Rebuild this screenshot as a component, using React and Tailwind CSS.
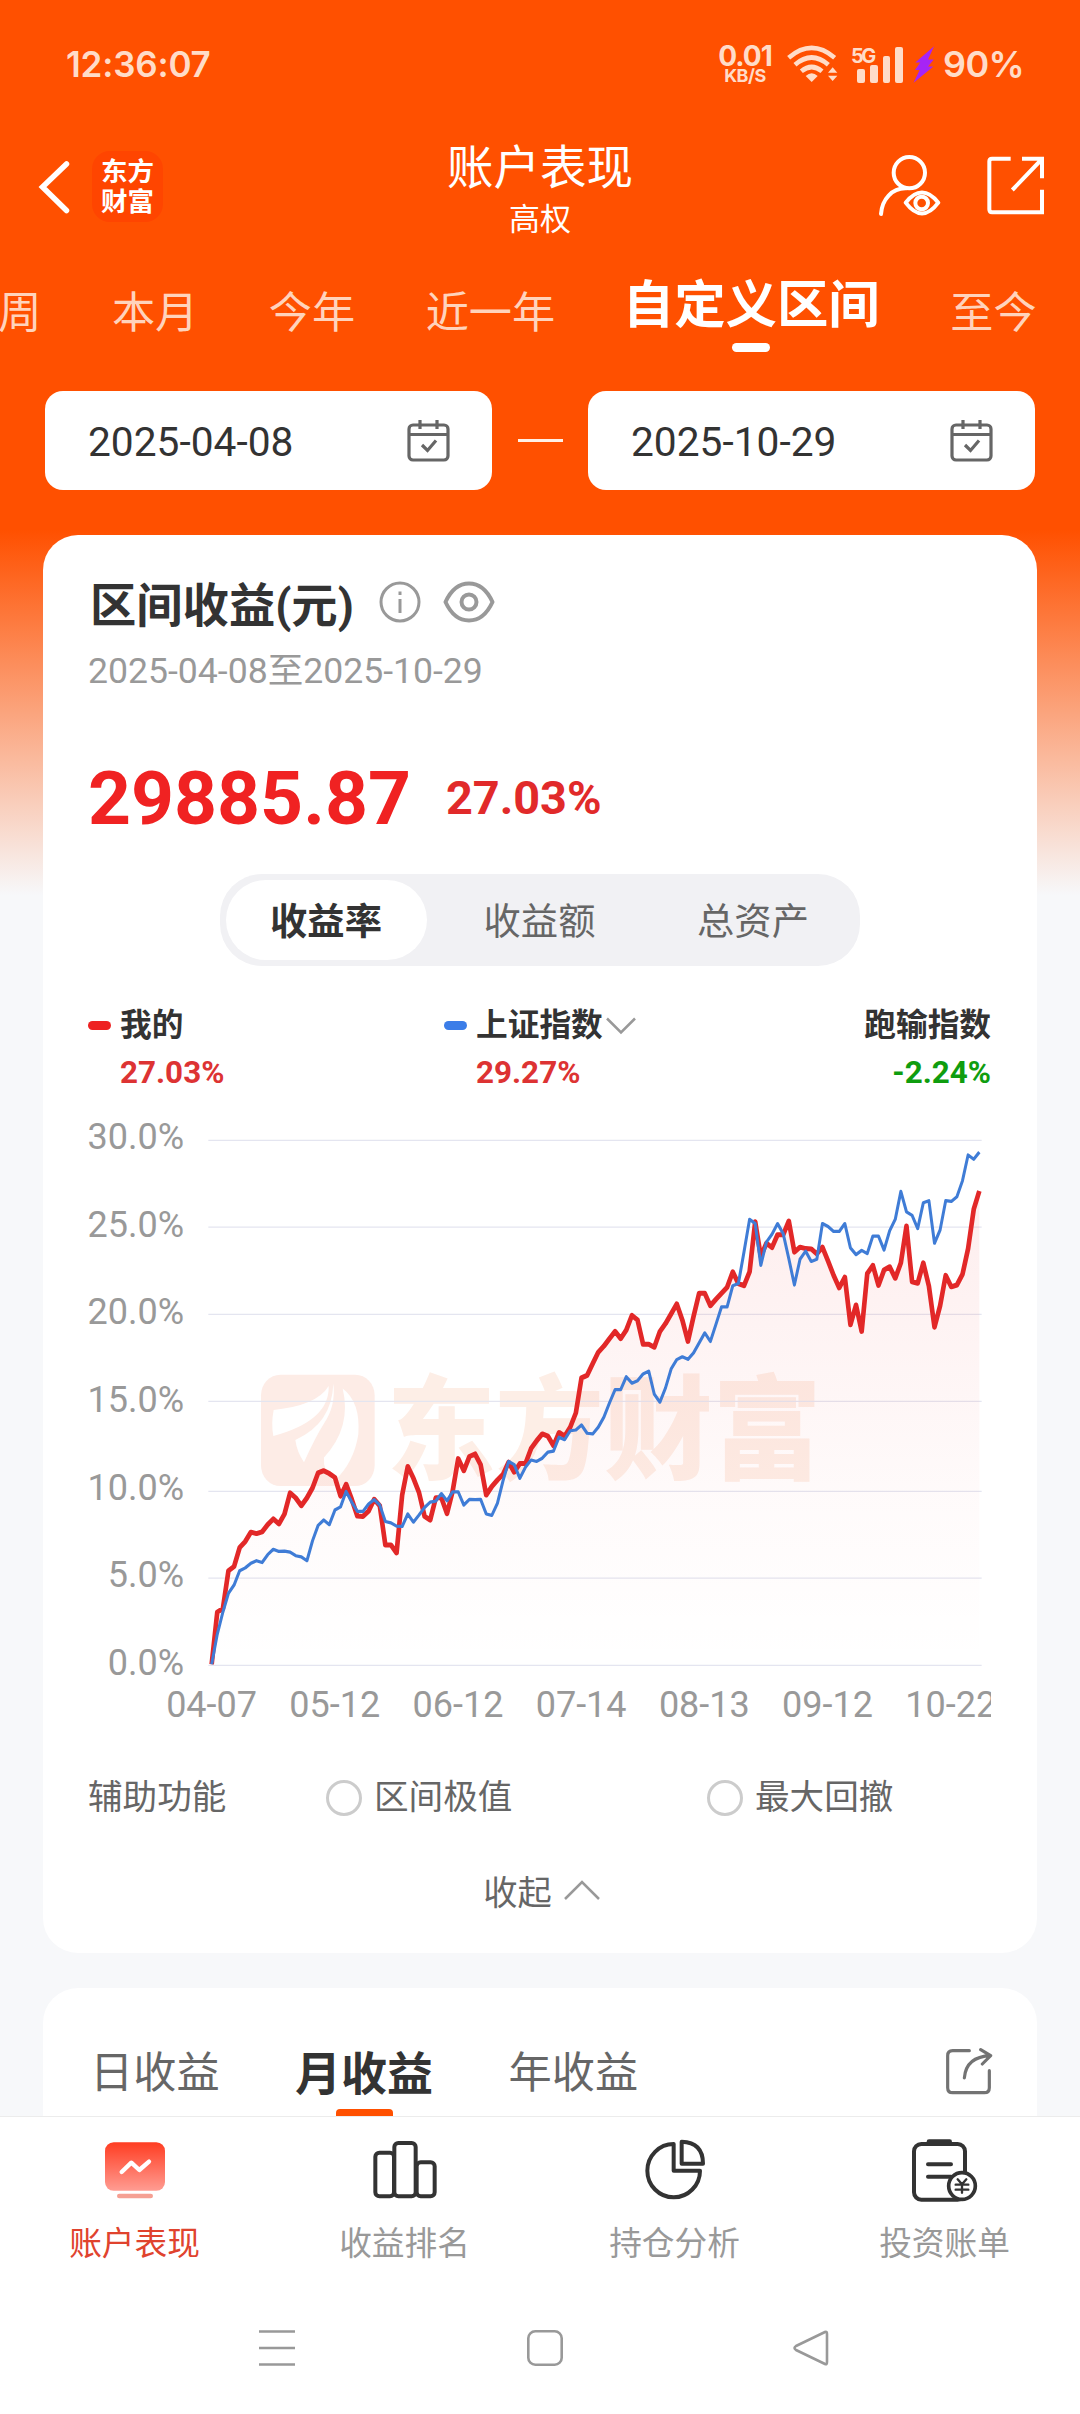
import React, { useState } from "react";

const periods = ["本周", "本月", "今年", "近一年", "自定义区间", "至今"];
const yLabels = ["30.0%", "25.0%", "20.0%", "15.0%", "10.0%", "5.0%", "0.0%"];
const xLabels = ["04-07", "05-12", "06-12", "07-14", "08-13", "09-12", "10-22"];
const gridLines = [57, 300, 544, 788, 1040, 1283, 1527];

const mine = [
  1524, 1378, 1368, 1262, 1250, 1197, 1180, 1154, 1158, 1153, 1133, 1117, 1131, 1103, 1044, 1058, 1080, 1058, 1030, 988,
  982, 990, 1001, 1053, 1020, 1062, 1109, 1110, 1095, 1062, 1080, 1190, 1190, 1212, 1050, 970, 1003, 1043, 1110, 1120,
  1058, 1058, 1102, 1040, 948, 982, 942, 935, 965, 1050, 1026, 1008, 992, 958, 986, 962, 962, 920, 898, 879,
  885, 912, 875, 885, 860, 820, 722, 715, 682, 650, 633, 612, 592, 612, 588, 547, 560, 628, 628, 636,
  592, 570, 543, 515, 560, 620, 550, 485, 485, 520, 502, 485, 468, 425, 458, 464, 425, 285, 382, 345,
  357, 321, 321, 283, 370, 356, 360, 361, 375, 356, 395, 435, 470, 440, 573, 518, 592, 430, 407, 463,
  420, 411, 443, 400, 297, 453, 457, 400, 465, 580, 520, 435, 467, 462, 432, 360, 250, 199,
];

const market = [
  1524, 1440, 1378, 1325, 1302, 1262, 1254, 1241, 1234, 1239, 1217, 1202, 1208, 1207, 1210, 1220, 1223, 1234, 1178, 1135,
  1120, 1133, 1092, 1083, 1040, 1070, 1096, 1096, 1075, 1063, 1078, 1124, 1128, 1137, 1138, 1103, 1126, 1106, 1085, 1070,
  1067, 1046, 1066, 1041, 1041, 1078, 1062, 1063, 1062, 1103, 1107, 1073, 1010, 956, 965, 1003, 972, 952, 956, 947,
  930, 927, 888, 895, 870, 868, 854, 877, 879, 860, 832, 792, 755, 755, 719, 737, 730, 711, 703, 768,
  790, 750, 697, 671, 663, 670, 652, 624, 596, 620, 572, 523, 523, 464, 458, 370, 278, 290, 407, 342,
  320, 290, 318, 388, 462, 390, 367, 396, 390, 290, 298, 312, 312, 290, 358, 377, 365, 374, 325, 325,
  364, 310, 278, 200, 257, 267, 304, 232, 226, 345, 308, 226, 228, 215, 170, 98, 110, 90,
];

const toPoints = (values) => values.map((y, i) => `${(65 + i * 16.81).toFixed(1)},${y}`).join(" ");

const StatusBar = () => (
  <div className="flex h-[128px] items-center justify-between pl-[66px] pr-[57px] font-['Inter',sans-serif] text-[#ffdcc8]">
    <span className="text-[35px] font-semibold tracking-[-0.2px]">12:36:07</span>
    <div className="flex items-center">
      <div className="flex w-[54px] flex-col items-center">
        <span className="text-[28px] font-bold leading-[22px] tracking-[-1px]">0.01</span>
        <span className="mt-px text-[18px] font-bold leading-[16px] tracking-[-0.5px]">KB/S</span>
      </div>
      <svg className="ml-[14px] h-[38px] w-[52px]" viewBox="256 44 156 114" fill="none" stroke="currentColor">
        <path d="M264 82Q333 23 402 82M283 103Q333 60 383 103M302 123Q333 97 364 123" strokeWidth="14" />
        <path d="M315 137Q333 121 351 137L333 155Z" fill="currentColor" stroke="none" />
        <path d="M382 127L396 111L410 127ZM382 136L396 152L410 136Z" fill="currentColor" stroke="none" />
      </svg>
      <div className="ml-[13px] flex h-[37px] w-[52px] items-end gap-[5px] pl-[6px]">
        <div className="relative h-[14px] w-[8px] rounded-[2px] bg-[#ffdcc8]">
          <span className="absolute -left-[6px] bottom-[17px] text-[20px] font-bold leading-[20px] tracking-[-2.500px]">5G</span>
        </div>
        <div className="h-[18px] w-[8px] rounded-[2px] bg-[#ffdcc8]" />
        <div className="h-[27px] w-[8px] rounded-[2px] bg-[#ffdcc8]" />
        <div className="h-[36px] w-[8px] rounded-[2px] bg-[#ffdcc8]" />
      </div>
      <svg className="ml-[10px] h-[37px] w-[22px]" viewBox="644 50 64 110">
        <path d="M706 51L650 99H665L649 121H663L645 159L704 111H688L705 90H688Z" fill="#a624f5" />
      </svg>
      <span className="ml-[8px] w-[80px] text-[36px] font-semibold tracking-[-0.6px]">90%</span>
    </div>
  </div>
);

const Header = () => (
  <header className="grid h-[120px] grid-cols-[1fr_auto_1fr] text-white">
    <div className="flex pl-[38px] pt-[23px]">
      <svg className="mt-[9px] h-[54px] w-[32px]" viewBox="0 0 32 54" fill="none" stroke="currentColor" strokeWidth="5.5" strokeLinecap="round">
        <path d="M28.5 4L4.500 27L28.500 50.500" />
      </svg>
      <div className="ml-[22px] flex h-[71px] w-[71px] flex-col items-center justify-center rounded-[18px] bg-[#ff4500] pt-px text-[26.500px] font-bold leading-[30px]">
        <span>东方</span>
        <span>财富</span>
      </div>
    </div>
    <div className="flex flex-col items-center pt-[12px]">
      <h1 className="text-[46.500px] leading-[56px]">账户表现</h1>
      <span className="mt-[4px] text-[31px] leading-[40px]">高权</span>
    </div>
    <div className="flex justify-end pr-[34px] pt-[26px]">
      <svg className="h-[64px] w-[64px]" viewBox="534 374 192 192" fill="none" stroke="currentColor" strokeWidth="12" strokeLinecap="round">
        <circle cx="628" cy="430" r="47" />
        <path d="M543 554C546 510 576 476 618 477" />
        <path d="M617 520Q666 459 715 520Q666 585 617 520Z" strokeLinejoin="round" />
        <circle cx="665" cy="521" r="19" />
      </svg>
      <svg className="ml-[44px] mt-px h-[60px] w-[60px]" viewBox="858 376 180 180" fill="none" stroke="currentColor" strokeWidth="12">
        <path d="M932 387H876Q868 387 868 395V539Q868 548 876 548H1026V480" />
        <path d="M966 387H1026V446M1026 388L937 481" />
      </svg>
    </div>
  </header>
);

const PeriodTabs = () => {
  const [active, setActive] = useState("自定义区间");
  return (
    <div className="overflow-hidden">
      <nav className="-ml-[45px] flex h-[143px] gap-[70.500px] whitespace-nowrap pt-[26px]">
        {periods.map((item) =>
          item === active ? (
            <button key={item} className="-ml-[3px] flex shrink-0 flex-col items-center text-[51.400px] font-bold leading-[64px] text-white">
              {item}
              <span className="mt-[5px] h-[9px] w-[38px] rounded-full bg-white" />
            </button>
          ) : (
            <button key={item} onClick={() => setActive(item)} className="h-[80px] shrink-0 text-[43.200px] text-[#ffd3bc]">
              {item}
            </button>
          )
        )}
      </nav>
    </div>
  );
};

const DateBox = ({ value }) => (
  <button className="flex h-[99px] w-[447px] items-center justify-between rounded-[18px] bg-white pl-[43px] pr-[42px] text-[40.700px] text-[#333]">
    <span className="pt-[4px]">{value}</span>
    <svg className="h-[42px] w-[43px]" viewBox="0 0 43 42" fill="none" stroke="#666" strokeWidth="3.2">
      <rect x="2" y="5" width="39" height="35" rx="4" />
      <path d="M2 14.500H41M13 0V9M30 0V9M15 25L20.500 30.500L29 20.500" />
    </svg>
  </button>
);

const Watermark = () => (
  <g>
    <rect x="213" y="713" width="341" height="312" rx="58" fill="#fdece6" />
    <path d="M251 812Q380 800 416 745Q420 842 250 885Q243 850 251 812Z" fill="#fff" />
    <path d="M430 738Q438 800 402 850Q378 885 342 958Q321 930 316 896Q426 850 430 738Z" fill="#fff" />
    <path d="M458 752Q512 790 505 880Q492 960 432 1012Q398 985 402 945Q486 860 458 752Z" fill="#fff" />
    <text x="590" y="980" fontSize="316" fontWeight="900" fill="#fdeee6" textLength="1304" lengthAdjust="spacingAndGlyphs">
      东方财富
    </text>
  </g>
);

const ReturnChart = () => (
  <div className="-mt-[11px]">
    <div className="flex">
      <div className="flex h-[566px] w-[96px] flex-col items-end justify-between text-[36px] leading-[40px] text-[#999]">
        {yLabels.map((label) => (
          <span key={label}>{label}</span>
        ))}
      </div>
      <svg className="ml-[6px] mt-[3px] h-[548.600px] w-[801px]" viewBox="0 0 2403 1536" preserveAspectRatio="none" fill="none">
        <defs>
          <linearGradient id="area" gradientUnits="userSpaceOnUse" x1="0" y1="200" x2="0" y2="1526">
            <stop offset="0" stopColor="#ee2222" stopOpacity="0.08" />
            <stop offset="0.65" stopColor="#ee2222" stopOpacity="0.02" />
            <stop offset="1" stopColor="#ee2222" stopOpacity="0" />
          </linearGradient>
        </defs>
        <Watermark />
        {gridLines.map((y) => (
          <line key={y} x1="55" x2="2375" y1={y} y2={y} stroke="#e4e5f0" strokeWidth="3.5" />
        ))}
        <polygon points={`65,1526 ${toPoints(mine)} 2368,1526`} fill="url(#area)" />
        <polyline points={toPoints(mine)} stroke="#e22828" strokeWidth="14" strokeLinejoin="round" />
        <polyline points={toPoints(market)} stroke="#3f7cd6" strokeWidth="9" strokeLinejoin="round" />
      </svg>
    </div>
    <div className="mr-px flex overflow-hidden pl-[62px] text-[36px] leading-[44px] text-[#999]">
      {xLabels.map((label) => (
        <span key={label} className="w-[123.200px] shrink-0 text-center">
          {label}
        </span>
      ))}
    </div>
  </div>
);

const Legend = () => (
  <div className="mt-[35px] flex h-[127px] justify-between text-[31.700px] font-bold text-[#333]">
    <div className="w-[356px]">
      <div className="flex h-[48px] items-center">
        <span className="mr-[9px] h-[9px] w-[23px] rounded-full bg-[#ee2222]" />
        <span className="pt-px">我的</span>
      </div>
      <div className="pl-[32px] text-[31.400px] leading-[48px] text-[#dd3333]">27.03%</div>
    </div>
    <div className="flex-1">
      <div className="flex h-[48px] items-center">
        <span className="mr-[9px] h-[9px] w-[23px] rounded-full bg-[#3b7de8]" />
        <span className="pt-px">上证指数</span>
        <svg className="ml-[3px] mt-[2px] h-[18px] w-[30px]" viewBox="0 0 30 18" fill="none" stroke="#999" strokeWidth="2.500">
          <path d="M1 1.500L15 15.500L29 1.500" />
        </svg>
      </div>
      <div className="pl-[32px] text-[31.400px] leading-[48px] text-[#dd3333]">29.27%</div>
    </div>
    <div className="pr-px text-right">
      <div className="flex h-[48px] items-center pt-px">跑输指数</div>
      <div className="text-[31.400px] leading-[48px] text-[#0f9d0f]">-2.24%</div>
    </div>
  </div>
);

const Segmented = () => {
  const [active, setActive] = useState("收益率");
  return (
    <div className="mx-auto mt-[33px] flex h-[92px] w-[640px] justify-between rounded-[42px] bg-[#f1f1f4] p-[6px]">
      {["收益率", "收益额", "总资产"].map((item) => (
        <button
          key={item}
          onClick={() => setActive(item)}
          className={`h-[80px] w-[201px] rounded-[40px] pt-[6px] pr-px text-[37.300px] ${
            item === active ? "bg-white font-bold text-[#333]" : "text-[#666]"
          }`}
        >
          {item}
        </button>
      ))}
    </div>
  );
};

const ReturnCard = () => (
  <section className="mx-[43px] h-[1418px] rounded-[35px] bg-white px-[45px] pt-[39px]">
    <div className="flex h-[64px] items-center">
      <h2 className="pl-[2px] text-[46.300px] font-bold leading-[64px] text-[#333]">区间收益(元)</h2>
      <svg className="ml-[25px] -mt-[8px] h-[42px] w-[42px]" viewBox="0 0 42 42" fill="none" stroke="#999" strokeWidth="3">
        <circle cx="21" cy="21" r="19" />
        <path d="M21 18V32M21 10.500V14" />
      </svg>
      <svg className="ml-[21px] -mt-[8px] h-[42px] w-[54px]" viewBox="0 0 54 42" fill="none" stroke="#999" strokeWidth="4">
        <path d="M3.500 21Q12 2.500 27 2.500T50.500 21Q42 39.500 27 39.500T3.500 21Z" strokeLinejoin="round" />
        <circle cx="27" cy="21" r="7.500" />
      </svg>
    </div>
    <p className="mt-[9px] text-[35.600px] leading-[48px] text-[#999]">2025-04-08至2025-10-29</p>
    <div className="mt-[60px] flex h-[86px] items-center font-bold">
      <span className="text-[75px] leading-[86px] text-[#f02222]">29885.87</span>
      <span className="ml-[35px] text-[46.800px] text-[#e12a2a]">27.03%</span>
    </div>
    <Segmented />
    <Legend />
    <ReturnChart />
    <div className="mt-[49px] flex h-[44px] items-center text-[34.600px] text-[#666]">
      <span className="w-[238px]">辅助功能</span>
      <label className="flex w-[381px] items-center">
        <span className="mr-[12px] h-[36px] w-[36px] rounded-full border-[3px] border-[#ccc]" />
        区间极值
      </label>
      <label className="flex items-center">
        <span className="mr-[12px] h-[36px] w-[36px] rounded-full border-[3px] border-[#ccc]" />
        最大回撤
      </label>
    </div>
    <button className="mx-auto mt-[50px] flex h-[48px] items-center pl-[3px] text-[34.300px] text-[#666]">
      收起
      <svg className="ml-[12px] -mt-[8px] h-[20px] w-[36px]" viewBox="0 0 36 20" fill="none" stroke="#999" strokeWidth="2.500">
        <path d="M1 19L18 2L35 19" />
      </svg>
    </button>
  </section>
);

const PeriodReturns = () => (
  <section className="mx-[43px] mt-[35px] flex h-[128px] justify-between overflow-hidden rounded-t-[35px] bg-white pl-[47px] pr-[44px] pt-[54px] text-[43.200px] leading-[64px] text-[#666]">
    <div className="flex gap-[75.500px]">
      <span>日收益</span>
      <div className="flex flex-col items-center text-[46px] font-bold text-[#333]">
        月收益
        <span className="mt-[3px] h-[10px] w-[57px] shrink-0 rounded-[4px] bg-[#ff5000]" />
      </div>
      <span>年收益</span>
    </div>
    <svg className="mt-[6px] h-[47px] w-[47px]" viewBox="1038 53 141 141" fill="none" stroke="#737373" strokeWidth="9.5" strokeLinecap="round" strokeLinejoin="round">
      <path d="M1108 61H1058Q1043 61 1043 76V172Q1043 187 1058 187H1153Q1168 187 1168 172V121" />
      <path d="M1093 143Q1098 79 1172 76M1142 58L1172 76L1147 101" />
    </svg>
  </section>
);

const AccountIcon = () => (
  <svg className="h-[64px] w-[66px]" viewBox="66 328 198 192">
    <defs>
      <linearGradient id="board" x1="0" y1="0" x2="0" y2="1">
        <stop offset="0" stopColor="#ff3d22" />
        <stop offset="1" stopColor="#ff9c92" />
      </linearGradient>
    </defs>
    <rect x="75" y="338" width="180" height="145" rx="26" fill="url(#board)" />
    <rect x="111" y="492" width="108" height="14" rx="7" fill="#f5a093" />
    <path d="M125 427L154 399L178 421L207 396" fill="none" stroke="#fff" strokeWidth="13" strokeLinecap="round" strokeLinejoin="round" />
  </svg>
);

const RankIcon = () => (
  <svg className="h-[64px] w-[66px]" viewBox="876 328 198 192" fill="none" stroke="#333" strokeWidth="12">
    <rect x="886" y="369" width="56" height="131" rx="12" />
    <rect x="943" y="340" width="64" height="160" rx="12" />
    <rect x="1010" y="398" width="54" height="102" rx="12" />
  </svg>
);

const PieIcon = () => (
  <svg className="h-[64px] w-[66px]" viewBox="126 328 198 192" fill="none" stroke="#333" strokeWidth="12" strokeLinejoin="round">
    <path d="M221 343A79 80 0 1 0 300 423H221Z" />
    <path d="M245 336Q309 338 309 402H245Z" />
  </svg>
);

const BillIcon = () => (
  <svg className="h-[64px] w-[68px]" viewBox="936 328 204 192" fill="none" stroke="#333" strokeWidth="12" strokeLinecap="round">
    <rect x="945" y="343" width="153" height="167" rx="22" />
    <path d="M990 336H1052" strokeWidth="14" />
    <path d="M987 404H1056M987 441H1056" />
    <circle cx="1089" cy="469" r="40" fill="#fff" strokeWidth="11" />
    <path d="M1076 449L1089 464L1102 449M1089 464V489M1070 465H1108M1070 480H1108" strokeWidth="7" />
  </svg>
);

const tabs = [
  { name: "账户表现", icon: AccountIcon, color: "text-[#e0432e]" },
  { name: "收益排名", icon: RankIcon, color: "text-[#999]" },
  { name: "持仓分析", icon: PieIcon, color: "text-[#999]" },
  { name: "投资账单", icon: BillIcon, color: "text-[#999]" },
];

const BottomNav = () => (
  <footer className="h-[298px] border-t border-[#ececec] bg-white">
    <div className="grid grid-cols-4">
      {tabs.map(({ name, icon: Icon, color }) => (
        <button key={name} className={`flex flex-col items-center pt-[22px] pr-px text-[32.700px] leading-[44px] ${color}`}>
          <Icon />
          <span className="mt-[19px]">{name}</span>
        </button>
      ))}
    </div>
    <div className="mt-[62px] flex h-[40px] items-center pl-[259px] text-[#999]">
      <svg className="h-[38px] w-[36px]" viewBox="0 0 36 38" stroke="currentColor" strokeWidth="2.600">
        <path d="M0 2.500H36M0 19H36M0 35.500H36" />
      </svg>
      <svg className="ml-[232px] h-[38px] w-[36px]" viewBox="0 0 36 38" fill="none" stroke="currentColor" strokeWidth="2.600">
        <rect x="1.300" y="2.300" width="33.400" height="33.400" rx="7" />
      </svg>
      <svg className="ml-[230px] h-[38px] w-[36px]" viewBox="0 0 36 38" fill="none" stroke="currentColor" strokeWidth="2.600" strokeLinejoin="round">
        <path d="M32 3Q34 2 34 5V33Q34 36 32 35L3 21Q0 19 3 17Z" />
      </svg>
    </div>
  </footer>
);

const App = () => {
  return (
    <main className="h-[2414px] w-[1080px] overflow-hidden bg-[#f7f8fa] bg-[linear-gradient(180deg,#ff5000_0px,#ff5000_530px,#f7f8fa_895px)] font-['Roboto','Noto_Sans_CJK_SC',sans-serif]">
      <StatusBar />
      <Header />
      <PeriodTabs />
      <div className="flex h-[144px] justify-between px-[45px]">
        <DateBox value="2025-04-08" />
        <span className="mt-[48px] h-[3px] w-[45px] bg-[#fff0e6]" />
        <DateBox value="2025-10-29" />
      </div>
      <ReturnCard />
      <PeriodReturns />
      <BottomNav />
    </main>
  );
};

export default App;
